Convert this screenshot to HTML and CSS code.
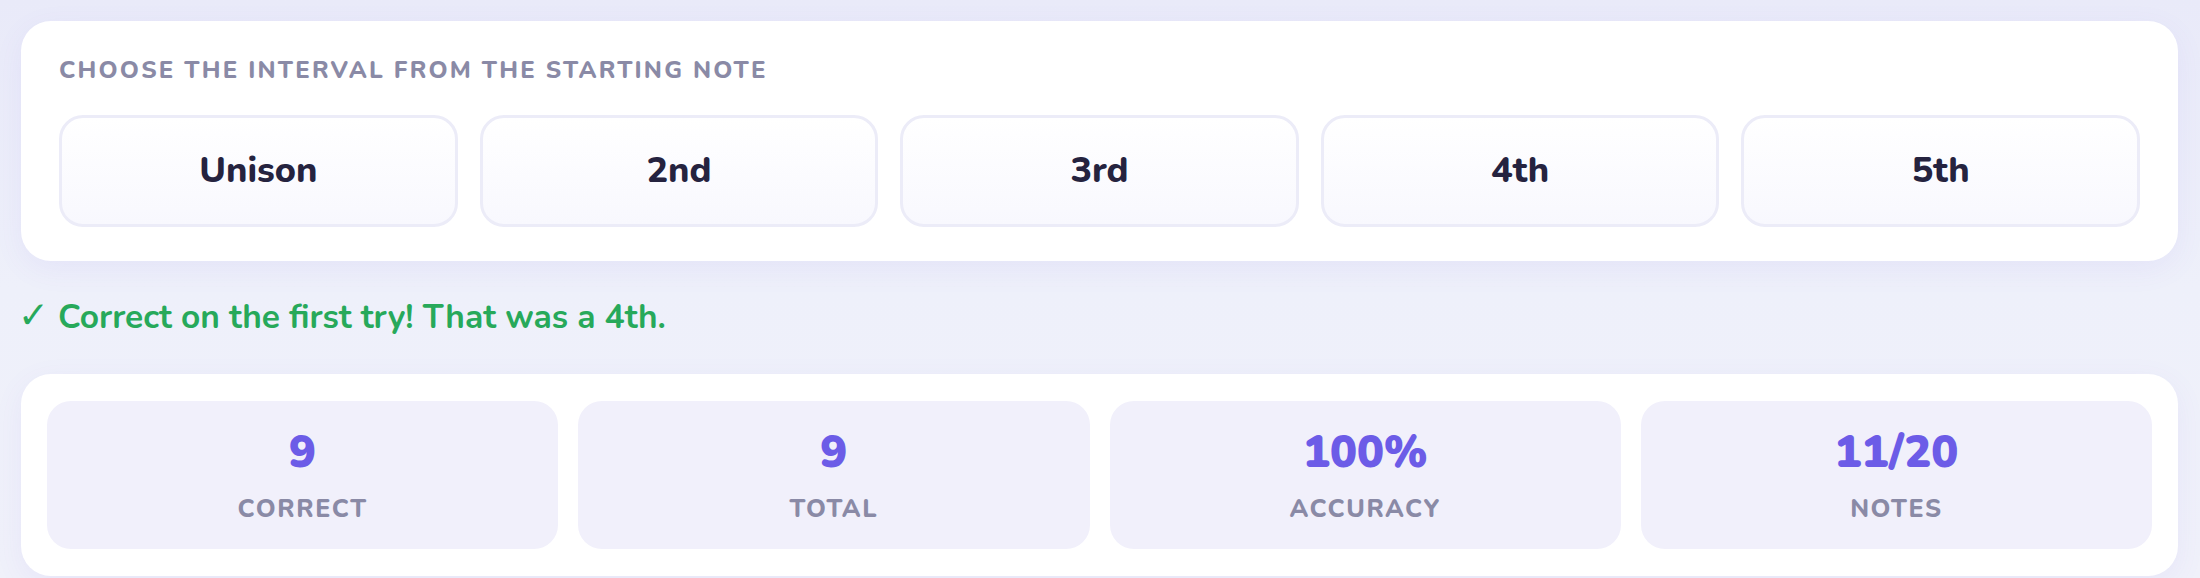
FILE: index.html
```html
<!DOCTYPE html>
<html lang="en">
<head>
<meta charset="utf-8">
<title>Interval trainer</title>
<link rel="stylesheet" href="styles.css">
</head>
<body>
<main class="page">
  <section class="card choices">
    <h2 class="prompt">Choose the interval from the starting note</h2>
    <div class="options">
      <button class="option">Unison</button>
      <button class="option">2nd</button>
      <button class="option">3rd</button>
      <button class="option">4th</button>
      <button class="option">5th</button>
    </div>
  </section>
  <p class="feedback"><span class="tick">✓</span> Correct on the first try! That was a 4th.</p>
  <section class="card stats">
    <div class="stat"><div class="stat-value">9</div><div class="stat-label">Correct</div></div>
    <div class="stat"><div class="stat-value">9</div><div class="stat-label">Total</div></div>
    <div class="stat"><div class="stat-value">100%</div><div class="stat-label">Accuracy</div></div>
    <div class="stat"><div class="stat-value">11/20</div><div class="stat-label">Notes</div></div>
  </section>
</main>
</body>
</html>
```

FILE: styles.css
```css
* { box-sizing: border-box; }
html, body { margin: 0; height: 100%; }
body {
  background: linear-gradient(180deg, #e9eaf9 0%, #eef0fa 50%, #f0f1fa 100%);
  font-family: "Nunito", "Lato", "Noto Sans", sans-serif;
  overflow: hidden;
}
.page {
  padding: 21px 22px 0 21px;
  display: flex;
  flex-direction: column;
}
.card {
  background: #ffffff;
  border-radius: 30px;
  box-shadow: 0 8px 30px rgba(108, 92, 231, 0.07);
}
.choices {
  padding: 35px 38px 34px 38px;
}
.prompt {
  margin: 0;
  font-size: 24px;
  line-height: 1.2;
  font-weight: 800;
  letter-spacing: 2.2px;
  text-transform: uppercase;
  color: #8a8aa6;
}
.options {
  margin-top: 30px;
  display: grid;
  grid-template-columns: repeat(5, 1fr);
  gap: 22px;
}
.option {
  height: 112px;
  border: 3px solid #ececf8;
  border-radius: 24px;
  background: linear-gradient(180deg, #ffffff 0%, #f8f8fe 100%);
  font-family: inherit;
  font-size: 36px;
  font-weight: 800;
  color: #25233f;
  padding: 0;
}
.feedback {
  margin: 35px 0 38px 0;
  font-size: 33.5px;
  line-height: 40px;
  height: 40px;
  font-weight: 700;
  color: #27a95a;
  padding-left: 0;
}
.tick {
  font-family: "DejaVu Sans", sans-serif;
  font-weight: 700;
  font-size: 37px;
  margin-left: -3px;
}
.stats {
  padding: 27px 26px;
  display: grid;
  grid-template-columns: repeat(4, 1fr);
  gap: 20px;
}
.stat {
  background: #f1f0fb;
  border-radius: 24px;
  padding: 25px 10px 25px;
  display: flex;
  flex-direction: column;
  align-items: center;
  gap: 14px;
}
.stat-value {
  font-size: 45px;
  line-height: 1.2;
  font-weight: 900;
  color: #6c5ce7;
}
.stat-label {
  font-size: 25px;
  line-height: 1.2;
  font-weight: 800;
  letter-spacing: 1.6px;
  text-transform: uppercase;
  color: #8a8aa6;
}
```
